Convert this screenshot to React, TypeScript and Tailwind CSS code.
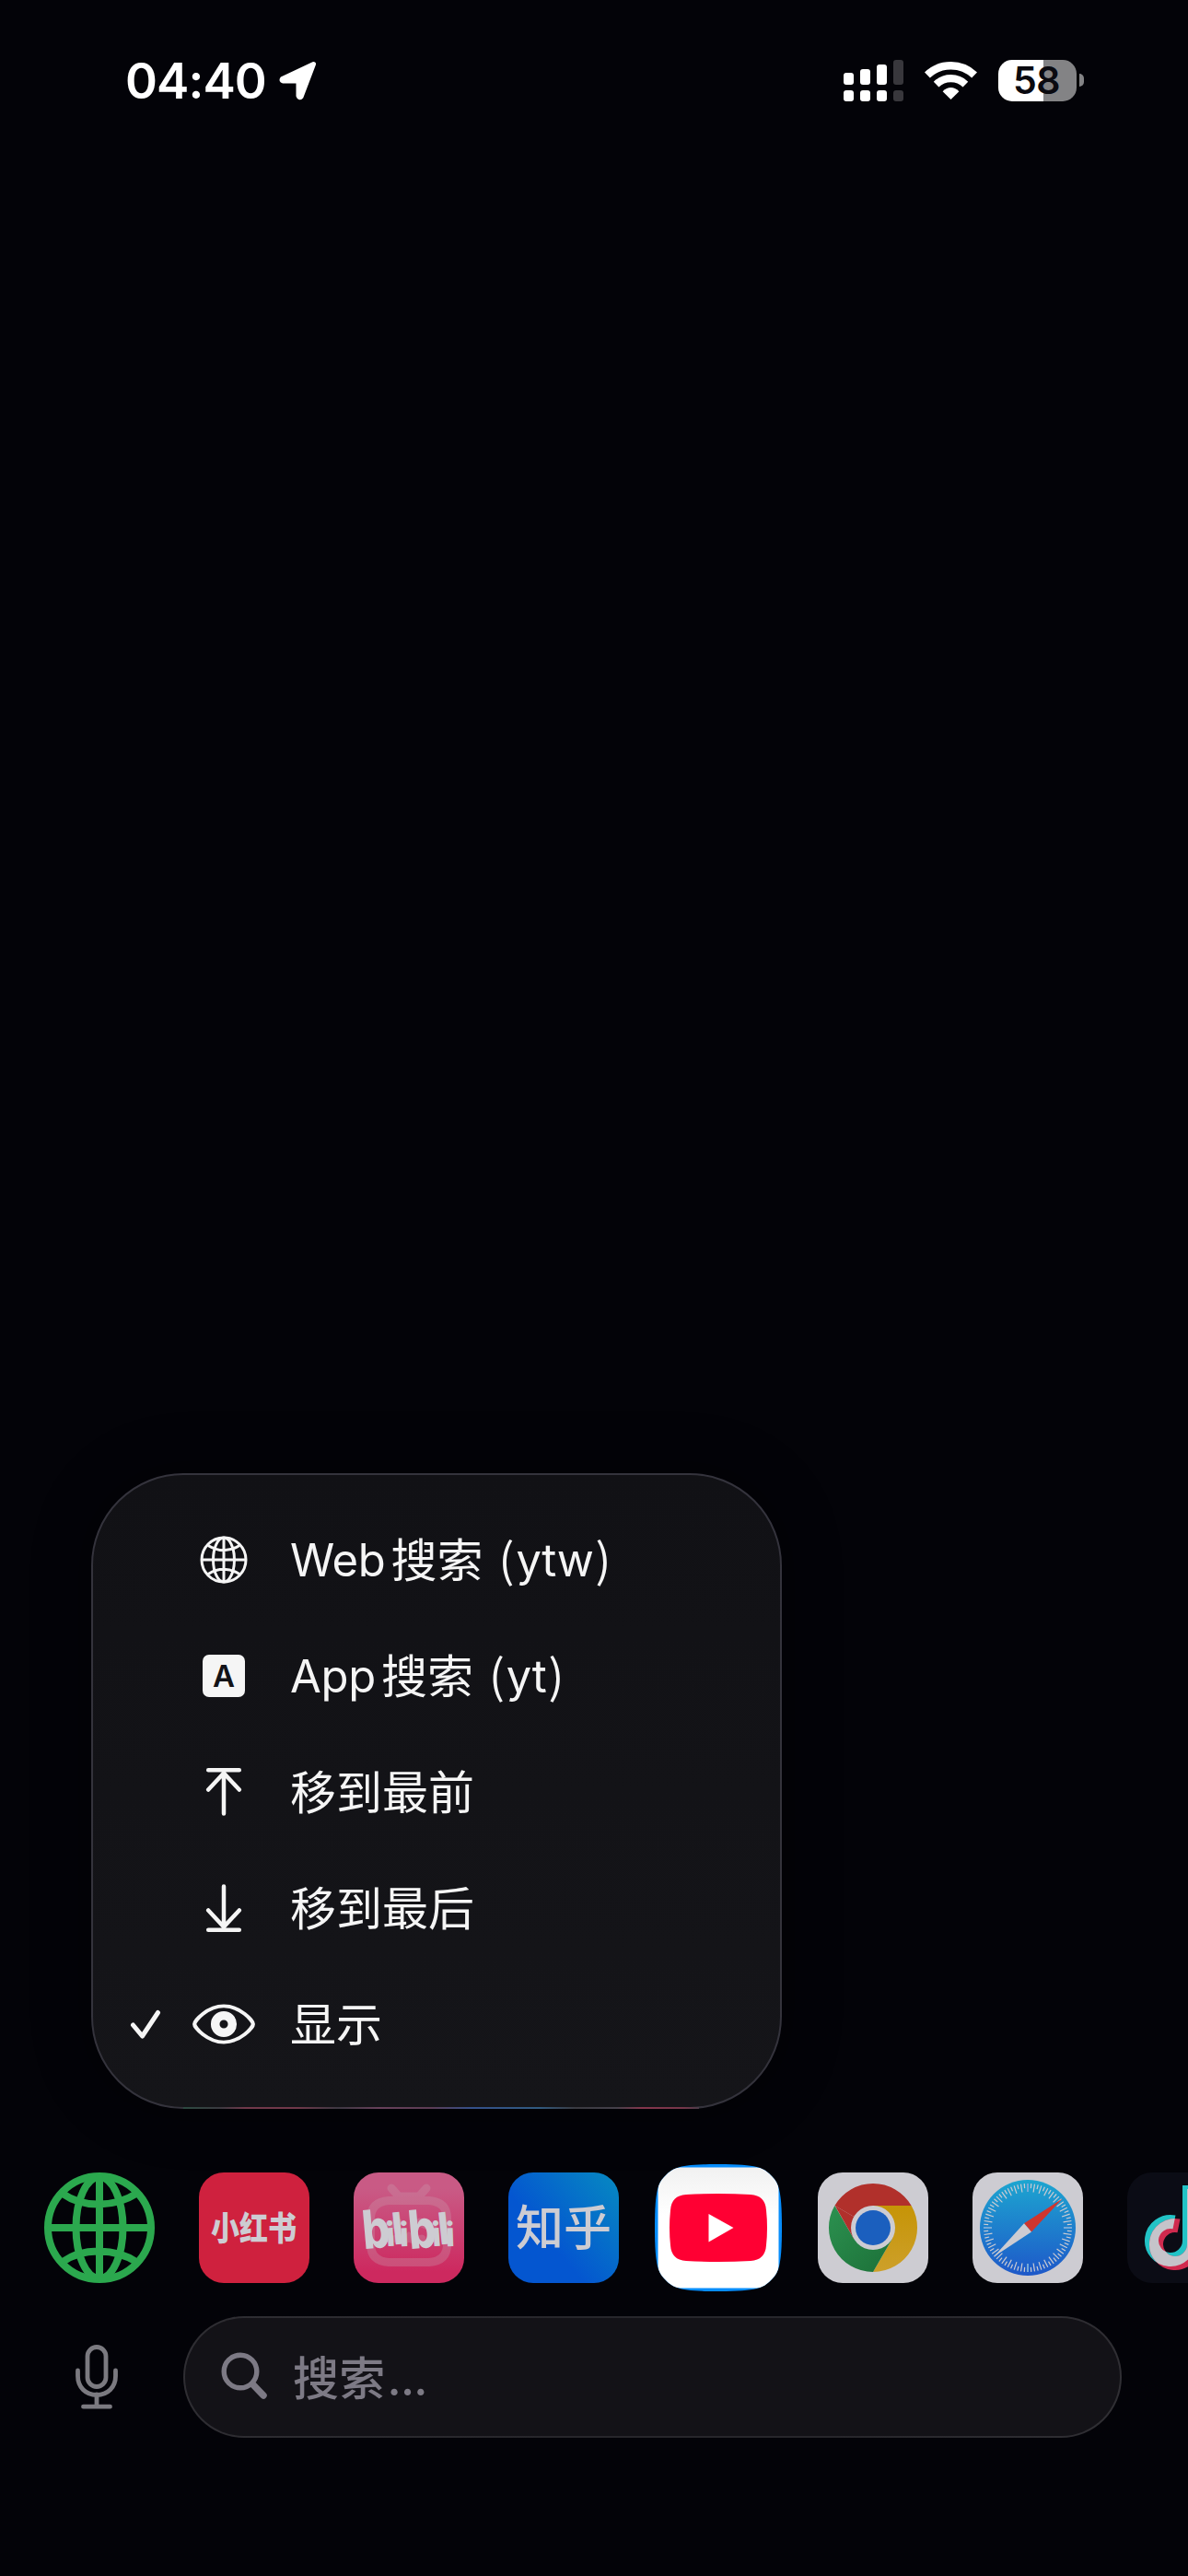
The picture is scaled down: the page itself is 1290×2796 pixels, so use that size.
import React from 'react';

function StatusBar() {
  return (
    <header className="flex h-[174px] items-center pl-[136px] pr-[113px]">
      <span className="pt-[2px] font-['Inter',sans-serif] text-[53px] font-semibold leading-none tracking-[-0.9px] text-white">04:40</span>
      <svg className="ml-[13px]" width="44" height="44" viewBox="0 0 44 44">
        <path d="M38.5 4.5 4.5 20.5 Q3 22.5 5.5 23 H22 V39 Q23 42 25 40Z" fill="#fff" stroke="#fff" strokeWidth="5" strokeLinejoin="round" />
      </svg>
      <div className="ml-auto flex items-center">
        <svg width="65" height="45" viewBox="0 0 65 45" fill="#fff">
          <rect x="0" y="14" width="11" height="13" rx="3" />
          <rect x="18" y="10" width="11" height="17" rx="3" />
          <rect x="36" y="5" width="11" height="22" rx="3" />
          <rect x="54" y="0" width="11" height="27" rx="3" fill="#38373c" />
          <rect x="0" y="33" width="11" height="12" rx="3" />
          <rect x="18" y="33" width="11" height="12" rx="3" />
          <rect x="36" y="33" width="11" height="12" rx="3" />
          <rect x="54" y="33" width="11" height="12" rx="3" fill="#38373c" />
        </svg>
        <svg className="ml-[22px]" width="60" height="45" viewBox="0 0 60 45" fill="none" stroke="#fff">
          <path d="M3.9 16.5 A37 37 0 0 1 55.1 16.5" strokeWidth="8.4" />
          <path d="M13.6 26.6 A23 23 0 0 1 45.4 26.6" strokeWidth="8.2" />
          <path d="M29.5 43 L20.6 34.2 Q29.5 26 38.4 34.2Z" fill="#fff" stroke="none" />
        </svg>
        <div className="ml-[21px] flex h-[45px] w-[85px] items-center justify-center rounded-[15px] bg-[linear-gradient(90deg,#fff_57.6%,#838385_57.6%)]">
          <span className="pr-[2px] font-['Inter',sans-serif] text-[41px] font-semibold leading-[45px] tracking-[-0.5px] text-[#0a0a10]">58</span>
        </div>
        <div className="ml-[3px] h-[14px] w-[5px] rounded-r-full bg-[#838385]" />
      </div>
    </header>
  );
}

const ink = '#f5f5f5';

function GlobeGlyph() {
  return (
    <svg width="52" height="52" viewBox="0 0 52 52" fill="none" stroke={ink} strokeWidth="3">
      <circle cx="26" cy="26" r="24" />
      <ellipse cx="26" cy="26" rx="11.5" ry="24" />
      <path d="M26 2V50M2 26H50M9 10.5Q26 21 43 10.5M9 41.5Q26 31 43 41.5" />
    </svg>
  );
}

function LetterGlyph() {
  return (
    <span className="flex size-[46px] items-center justify-center rounded-[7px] bg-[#f5f5f5] font-['Inter',sans-serif] text-[33px] font-semibold leading-none text-[#131317]">A</span>
  );
}

function ArrowGlyph({ down = false }: { down?: boolean }) {
  return (
    <svg width="40" height="54" viewBox="0 0 40 54" fill="none" stroke={ink} strokeWidth="4.5" strokeLinecap="round" strokeLinejoin="round" className={down ? 'rotate-180' : ''}>
      <path d="M3.2 3.3H36.8M20 6.5V50.5M3.2 24.5 20 6.5 36.8 24.5" />
    </svg>
  );
}

function EyeGlyph() {
  return (
    <svg width="70" height="52" viewBox="0 -4 70 52" fill="none" stroke={ink}>
      <path d="M3.2 22C3.2 18 17 -0.5 35 -0.5S66.8 18 66.8 22 53 44.500 35 44.500 3.2 26 3.2 22Z" strokeWidth="4.300" transform="translate(0 2.900) scale(1 .868)" />
      <circle cx="35" cy="22" r="9.300" strokeWidth="9.500" />
    </svg>
  );
}

function CheckGlyph() {
  return (
    <svg width="34" height="34" viewBox="0 0 34 34" fill="none" stroke={ink} strokeWidth="5" strokeLinecap="round" strokeLinejoin="round">
      <path d="M3.500 18 13.500 30 30.500 4.500" />
    </svg>
  );
}

function MenuRow({ icon, checked, children }: { icon: React.ReactNode; checked?: boolean; children: React.ReactNode }) {
  return (
    <li className="flex h-[126px] items-center">
      <span className="flex w-[120px] justify-end pr-[46px]">{checked && <CheckGlyph />}</span>
      <span className="-ml-[13px] flex w-[70px] justify-center">{icon}</span>
      <span className="ml-[37px] flex items-center text-[#f5f5f5]">{children}</span>
    </li>
  );
}

function Latin({ children }: { children: React.ReactNode }) {
  return <span className="font-['Inter',sans-serif] text-[49px] leading-none tracking-[-0.3px]">{children}</span>;
}

function Han({ children }: { children: React.ReactNode }) {
  return <span className="pb-[7px] font-['Noto_Sans_CJK_SC',sans-serif] text-[50px] leading-none">{children}</span>;
}

function ShortcutLabel({ kind, code }: { kind: string; code: string }) {
  return (
    <>
      <Latin>{kind}</Latin>
      <span className="ml-[6px] flex"><Han>搜索</Han></span>
      <span className="ml-[17px] flex items-center gap-[2px]"><Han>(</Han><Latin>{code}</Latin><Han>)</Han></span>
    </>
  );
}

function Menu() {
  return (
    <section className="relative ml-[99px] mt-[1425px] h-[690px] w-[750px] rounded-[100px] border-2 border-[#34333c] bg-linear-to-b from-[#111115] to-[#151519] pt-[29px] shadow-[0_0_50px_15px_rgba(0,0,0,0.25)]">
      <ul>
        <MenuRow icon={<GlobeGlyph />}><ShortcutLabel kind="Web" code="ytw" /></MenuRow>
        <MenuRow icon={<LetterGlyph />}><ShortcutLabel kind="App" code="yt" /></MenuRow>
        <MenuRow icon={<ArrowGlyph />}><Han>移到最前</Han></MenuRow>
        <MenuRow icon={<ArrowGlyph down />}><Han>移到最后</Han></MenuRow>
        <MenuRow icon={<EyeGlyph />} checked><Han>显示</Han></MenuRow>
      </ul>
      <div className="absolute -bottom-[2px] left-[98px] h-[2px] w-[560px] bg-[linear-gradient(90deg,#2c4a40_0%,#3a3a40_7%,#70384a_12%,#70384a_22%,#3d3842_30%,#67405a_38%,#5c3c54_48%,#34508a_56%,#315a80_69%,#3a3a40_76%,#44404a_84%,#84354c_89%,#75364a_97%,#4a3c48_100%)]" />
    </section>
  );
}

const silver = '#cdccd2';

function GlobeApp() {
  return (
    <svg className="shrink-0" width="120" height="120" viewBox="0 0 120 120" fill="none" stroke="#2ba84e" strokeWidth="8" strokeLinecap="round">
      <circle cx="60" cy="60" r="56" />
      <ellipse cx="60" cy="60" rx="25.500" ry="55" />
      <path d="M60 6V114M7 60H113M20 23Q37 35 60 34.500T100 23M20 97Q37 85 60 85.500T100 97" />
    </svg>
  );
}

function XhsApp() {
  return (
    <svg className="shrink-0" width="120" height="120" viewBox="0 0 120 120">
      <rect width="120" height="120" rx="27" fill="#cf213e" />
      <text x="13" y="74" textLength="93" lengthAdjust="spacingAndGlyphs" fill={silver} className="font-['Noto_Sans_CJK_SC',sans-serif] text-[36px] font-black">小红书</text>
    </svg>
  );
}

function BilibiliApp() {
  return (
    <svg className="shrink-0" width="120" height="120" viewBox="0 0 120 120">
      <defs>
        <linearGradient id="bili" x1="0" y1="0" x2="0" y2="1">
          <stop offset="0.150" stopColor="#c95a85" /><stop offset="0.900" stopColor="#cd295f" />
        </linearGradient>
      </defs>
      <rect width="120" height="120" rx="27" fill="url(#bili)" />
      <g fill="none" stroke="#cb9aae" strokeOpacity="0.320" strokeWidth="9" strokeLinecap="round">
        <path d="M41 17 49 26H71L79 17M49 30.500H38Q18.500 32 18.500 50V78Q18.500 96 38 97.500H82Q101.500 96 101.500 78V50Q101.500 32 82 30.500H49M34 60 48 54M72 54 86 60M46 72Q53 76 60 70Q67 76 74 72" />
      </g>
      <g fill={silver} className="font-['Inter',sans-serif] font-extrabold">
        <g id="bili-half">
          <text x="9" y="82" fontSize="58" textLength="30" lengthAdjust="spacingAndGlyphs" transform="rotate(-5 24 60)">b</text>
          <text x="35" y="80" fontSize="36" textLength="10" lengthAdjust="spacingAndGlyphs" transform="rotate(-4 40 70)">i</text>
          <text x="41.500" y="78" fontSize="48" textLength="12" lengthAdjust="spacingAndGlyphs" transform="rotate(-6 48 60)">l</text>
          <text x="50" y="80" fontSize="36" textLength="10" lengthAdjust="spacingAndGlyphs" transform="rotate(-2 54 70)">i</text>
        </g>
        <use href="#bili-half" x="50" />
      </g>
    </svg>
  );
}

function ZhihuApp() {
  return (
    <svg className="shrink-0" width="120" height="120" viewBox="0 0 120 120">
      <defs>
        <linearGradient id="zhihu" x1="0.950" y1="0.100" x2="0.350" y2="0.600">
          <stop stopColor="#0684c3" /><stop offset="1" stopColor="#0456d0" />
        </linearGradient>
      </defs>
      <rect width="120" height="120" rx="27" fill="url(#zhihu)" />
      <text x="8" y="78.500" textLength="104" lengthAdjust="spacingAndGlyphs" fill={silver} className="font-['Noto_Sans_CJK_SC',sans-serif] text-[52px] font-medium">知乎</text>
    </svg>
  );
}

function YoutubeApp() {
  return (
    <svg className="-mx-[9px] shrink-0" width="138" height="138" viewBox="0 0 138 138">
      <defs>
        <clipPath id="ytclip"><path d="M69 0C112 0 118 4 126 12S138 26 138 69 134 118 126 126 112 138 69 138 20 134 12 126 0 112 0 69 4 20 12 12 26 0 69 0Z" /></clipPath>
        <linearGradient id="ytbg" x1="0" y1="0" x2="0" y2="1"><stop stopColor="#f1f1f1" /><stop offset="0.400" stopColor="#fff" /></linearGradient>
      </defs>
      <g clipPath="url(#ytclip)">
        <rect width="138" height="138" fill="#078dfb" />
        <rect x="3.500" y="3.500" width="131" height="131" rx="24" fill="url(#ytbg)" />
      </g>
      <path d="M34 33Q69 31 104 33 120 34 121 50 123 69 121 88 120 104 104 105 69 107 34 105 18 104 17 88 15 69 17 50 18 34 34 33Z" fill="#ff0033" />
      <path d="M58.500 54V84.500L85.500 69Z" fill="#fff" />
    </svg>
  );
}

function ChromeApp() {
  return (
    <svg className="shrink-0" width="120" height="120" viewBox="0 0 120 120">
      <defs>
        <linearGradient id="cg" x1="0" y1="0" x2="1" y2="1"><stop stopColor="#2c9150" /><stop offset="1" stopColor="#1c7038" /></linearGradient>
        <linearGradient id="cy" x1="0" y1="0" x2="0" y2="1"><stop stopColor="#c69406" /><stop offset="1" stopColor="#cda02a" /></linearGradient>
      </defs>
      <rect width="120" height="120" rx="27" fill={silver} />
      <path d="M60 60 18.400 36A48 48 0 0 1 101.600 36H60Z" fill="#b1302b" />
      <path d="M60 36H101.600A48 48 0 0 1 60 108L80.800 72Z" fill="url(#cy)" />
      <path d="M18.400 36 39.200 72 80.800 72 60 108A48 48 0 0 1 18.400 36Z" fill="url(#cg)" />
      <path d="M18.800 36.300 39.200 72 60 60Z" fill="#b1302b" />
      <circle cx="60" cy="60" r="24" fill={silver} />
      <circle cx="60" cy="60" r="19" fill="#1b5fbe" />
    </svg>
  );
}

function SafariApp() {
  const ticks = Array.from({ length: 80 }, (_, i) => i).filter((i) => i % 20 !== 0);
  return (
    <svg className="shrink-0" width="120" height="120" viewBox="0 0 120 120">
      <defs>
        <linearGradient id="saf" x1="0" y1="0" x2="0" y2="1"><stop stopColor="#1da6d0" /><stop offset="1" stopColor="#1e58c9" /></linearGradient>
      </defs>
      <rect width="120" height="120" rx="27" fill={silver} />
      <circle cx="60" cy="60" r="52" fill="url(#saf)" />
      {ticks.map((i) => (
        <path key={i} d={i % 2 ? 'M60 12V17' : 'M60 12V21'} stroke={silver} strokeWidth="1.200" transform={`rotate(${i * 4.5} 60 60)`} />
      ))}
      <path d="M60 12V21M60 99V108M12 60H21M99 60H108" stroke="#74a9d8" strokeWidth="2" />
      <path d="M97.500 28.500 56 55.300 64 64.500Z" fill="#cf352e" />
      <path d="M23 91.500 56 55.300 64 64.500Z" fill={silver} />
    </svg>
  );
}

function TiktokApp() {
  const note = 'M51 53.900A20.500 20.500 0 1 0 67.500 74V14';
  return (
    <svg className="shrink-0" width="120" height="120" viewBox="0 0 120 120" fill="none">
      <defs>
        <mask id="note" maskUnits="userSpaceOnUse" x="0" y="0" width="120" height="120"><path d={note} stroke="#fff" strokeWidth="15" /></mask>
      </defs>
      <rect width="120" height="120" rx="27" fill="#0b0c15" />
      <path d={note} stroke="#22c3c6" strokeWidth="15" />
      <path d={note} stroke="#d02a4e" strokeWidth="15" transform="translate(5 4)" />
      <g mask="url(#note)"><path d={note} stroke="#c5c4ca" strokeWidth="15" transform="translate(5 4)" /></g>
    </svg>
  );
}

function SearchBar() {
  return (
    <div className="mt-[27px] flex items-center pl-[81px]">
      <svg width="48" height="70" viewBox="0 0 48 70" fill="none" stroke="#7b7a80" strokeWidth="4.800" strokeLinecap="round">
        <rect x="14" y="2.500" width="20" height="43" rx="10" />
        <path d="M3.500 28V34C3.500 46 12 54.500 24 54.500S44.500 46 44.500 34V28M24 54V66M9.500 67.200H38.500" />
      </svg>
      <div className="ml-[70px] h-[132px] w-[1019px] rounded-full bg-[linear-gradient(100deg,#2f2e33_0%,#27262b_40%,#27262b_70%,#302f34_100%)] p-[2px]">
        <div className="flex h-full items-center rounded-full bg-[#131217]">
          <svg className="-mt-[3px] ml-[39px]" width="51" height="52" viewBox="0 0 51 52" fill="none" stroke="#7d7a85" strokeLinecap="round">
            <circle cx="21" cy="21" r="17.800" strokeWidth="5.400" />
            <path d="M34.500 35 46 47" strokeWidth="7.500" />
          </svg>
          <span className="ml-[27px] font-['Noto_Sans_CJK_SC',sans-serif] text-[50px] font-medium leading-none tracking-[0.300px] text-[#7d7a85]">搜索<span className="ml-[2px] font-['Inter',sans-serif] tracking-[-0.800px]">...</span></span>
        </div>
      </div>
    </div>
  );
}

export default function App() {
  return (
    <main className="h-[2796px] w-[1290px] overflow-hidden bg-[#030308]">
      <StatusBar />
      <Menu />
      <nav className="mt-[60px] flex h-[138px] items-center gap-[48px] overflow-hidden pl-[48px]">
        <GlobeApp />
        <XhsApp />
        <BilibiliApp />
        <ZhihuApp />
        <YoutubeApp />
        <ChromeApp />
        <SafariApp />
        <TiktokApp />
      </nav>
      <SearchBar />
    </main>
  );
}
